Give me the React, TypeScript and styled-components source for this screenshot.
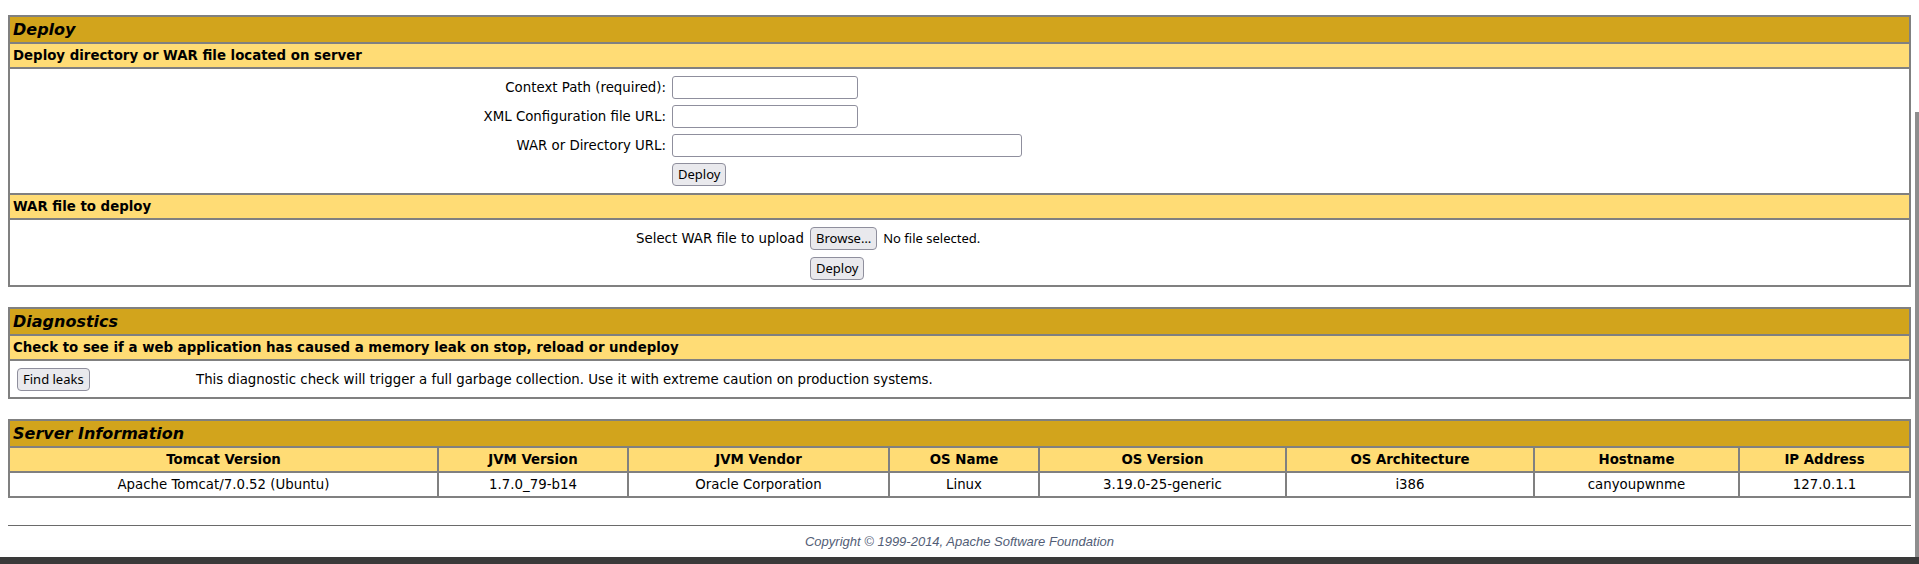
import React from "react";
import styled, { createGlobalStyle } from "styled-components";

const GlobalStyle = createGlobalStyle`
  *, *::before, *::after { box-sizing: border-box; }
  html, body { background: #ffffff; }
  body {
    margin: 0;
    padding: 15px 8px 0;
    font-family: "DejaVu Sans", sans-serif;
    color: #000000;
  }
`;

const Page = styled.div`
  display: flex;
  flex-direction: column;
  gap: 20px;
`;

const Panel = styled.table`
  width: 100%;
  border-spacing: 0;
  border: 1px solid #808080;
  table-layout: fixed;
`;

const Col = styled.col<{ $w: number }>`
  width: ${(p) => p.$w}px;
`;

const TitleCell = styled.td`
  background: #d2a41c;
  border: 1px solid #808080;
  padding: 3px;
  font-family: "DejaVu Sans", sans-serif;
  font-style: italic;
  font-weight: bold;
  font-size: 16px;
  line-height: 19px;
  text-align: left;
  vertical-align: top;
`;

const HeaderCell = styled.td<{ $center?: boolean }>`
  background: #ffdc75;
  border: 1px solid #808080;
  padding: 3px;
  font-family: "DejaVu Sans", sans-serif;
  font-weight: bold;
  font-size: 13.33px;
  line-height: 17px;
  text-align: ${(p) => (p.$center ? "center" : "left")};
  vertical-align: top;
  white-space: nowrap;
  overflow: hidden;
`;

const DataCell = styled.td`
  background: #ffffff;
  border: 1px solid #808080;
  padding: 3px;
  font-size: 13.33px;
  line-height: 17px;
  text-align: center;
  vertical-align: middle;
  white-space: nowrap;
  overflow: hidden;
`;

const BodyCell = styled.td<{ $top?: number; $bottom?: number }>`
  background: #ffffff;
  border: 1px solid #808080;
  padding: ${(p) => p.$top ?? 4}px 3px ${(p) => p.$bottom ?? 3}px;
`;

const FormGrid = styled.div<{ $labelWidth: number; $gap: number }>`
  display: grid;
  grid-template-columns: ${(p) => p.$labelWidth}px 1fr;
  row-gap: ${(p) => p.$gap}px;
`;

const FieldLabel = styled.div`
  padding: 3px;
  text-align: right;
  align-self: center;
  font-size: 13.33px;
  line-height: 17px;
  white-space: nowrap;
`;

const FieldControl = styled.div`
  padding: 3px;
  display: flex;
  align-items: center;
  gap: 6px;
`;

const TextInput = styled.input<{ $w: number }>`
  width: ${(p) => p.$w}px;
  height: 23px;
  border: 1px solid #8f8f9d;
  border-radius: 3px;
  background: #ffffff;
  padding: 0 4px;
  font-family: "Noto Sans", sans-serif;
  font-size: 13px;
  outline: none;
`;

const Button = styled.button`
  height: 23px;
  padding: 0 5px;
  border: 1px solid #8f8f9d;
  border-radius: 4px;
  background: #e9e9ed;
  color: #000000;
  font-family: "Noto Sans", sans-serif;
  font-size: 13px;
  line-height: 21px;
  cursor: pointer;
`;

const FileStatus = styled.span`
  font-family: "Noto Sans", sans-serif;
  font-size: 13px;
  line-height: 17px;
`;

const DiagRow = styled.div`
  display: grid;
  grid-template-columns: 180px 1fr;
  align-items: center;
`;

const DiagAction = styled.div`
  padding: 3px 3px 3px 4px;
  display: flex;
`;

const DiagText = styled.div`
  padding: 3px;
  font-size: 13.33px;
  line-height: 17px;
`;

const Footer = styled.div`
  margin-top: 27px;
  display: flex;
  flex-direction: column;
  gap: 8px;
`;

const Rule = styled.hr`
  margin: 0;
  border: none;
  height: 1px;
  background: #6a6a6a;
`;

const Copyright = styled.div`
  text-align: center;
  font-family: "Liberation Sans", Arial, sans-serif;
  font-style: italic;
  font-size: 13px;
  line-height: 15px;
  color: #525d76;
`;

const ScrollThumb = styled.div`
  position: fixed;
  top: 112px;
  right: 0;
  bottom: 7px;
  width: 4px;
  background: #8e8e8e;
`;

const BottomBar = styled.div`
  position: fixed;
  left: 0;
  right: 0;
  bottom: 0;
  height: 7px;
  background: #3a3a3a;
`;

const serverColumns = [
  { head: "Tomcat Version", value: "Apache Tomcat/7.0.52 (Ubuntu)", w: 429 },
  { head: "JVM Version", value: "1.7.0_79-b14", w: 190 },
  { head: "JVM Vendor", value: "Oracle Corporation", w: 261 },
  { head: "OS Name", value: "Linux", w: 150 },
  { head: "OS Version", value: "3.19.0-25-generic", w: 247 },
  { head: "OS Architecture", value: "i386", w: 248 },
  { head: "Hostname", value: "canyoupwnme", w: 205 },
  { head: "IP Address", value: "127.0.1.1", w: 171 },
];

export default function App() {
  return (
    <>
      <GlobalStyle />
      <Page>
        <Panel>
          <tbody>
            <tr>
              <TitleCell>Deploy</TitleCell>
            </tr>
            <tr>
              <HeaderCell>Deploy directory or WAR file located on server</HeaderCell>
            </tr>
            <tr>
              <BodyCell $bottom={4}>
                <FormGrid $labelWidth={656} $gap={0}>
                  <FieldLabel>Context Path (required):</FieldLabel>
                  <FieldControl>
                    <TextInput $w={186} type="text" />
                  </FieldControl>
                  <FieldLabel>XML Configuration file URL:</FieldLabel>
                  <FieldControl>
                    <TextInput $w={186} type="text" />
                  </FieldControl>
                  <FieldLabel>WAR or Directory URL:</FieldLabel>
                  <FieldControl>
                    <TextInput $w={350} type="text" />
                  </FieldControl>
                  <FieldLabel>&nbsp;</FieldLabel>
                  <FieldControl>
                    <Button type="button">Deploy</Button>
                  </FieldControl>
                </FormGrid>
              </BodyCell>
            </tr>
            <tr>
              <HeaderCell>WAR file to deploy</HeaderCell>
            </tr>
            <tr>
              <BodyCell $top={4} $bottom={2}>
                <FormGrid $labelWidth={794} $gap={1}>
                  <FieldLabel>Select WAR file to upload</FieldLabel>
                  <FieldControl>
                    <Button type="button">Browse…</Button>
                    <FileStatus>No file selected.</FileStatus>
                  </FieldControl>
                  <FieldLabel>&nbsp;</FieldLabel>
                  <FieldControl>
                    <Button type="button">Deploy</Button>
                  </FieldControl>
                </FormGrid>
              </BodyCell>
            </tr>
          </tbody>
        </Panel>

        <Panel>
          <tbody>
            <tr>
              <TitleCell>Diagnostics</TitleCell>
            </tr>
            <tr>
              <HeaderCell>
                Check to see if a web application has caused a memory leak on stop, reload or undeploy
              </HeaderCell>
            </tr>
            <tr>
              <BodyCell>
                <DiagRow>
                  <DiagAction>
                    <Button type="button">Find leaks</Button>
                  </DiagAction>
                  <DiagText>
                    This diagnostic check will trigger a full garbage collection. Use it with extreme
                    caution on production systems.
                  </DiagText>
                </DiagRow>
              </BodyCell>
            </tr>
          </tbody>
        </Panel>

        <Panel>
          <colgroup>
            {serverColumns.map((c) => (
              <Col key={c.head} $w={c.w} />
            ))}
          </colgroup>
          <tbody>
            <tr>
              <TitleCell colSpan={8}>Server Information</TitleCell>
            </tr>
            <tr>
              {serverColumns.map((c) => (
                <HeaderCell key={c.head} $center>
                  {c.head}
                </HeaderCell>
              ))}
            </tr>
            <tr>
              {serverColumns.map((c) => (
                <DataCell key={c.head}>{c.value}</DataCell>
              ))}
            </tr>
          </tbody>
        </Panel>
      </Page>

      <Footer>
        <Rule />
        <Copyright>Copyright © 1999-2014, Apache Software Foundation</Copyright>
      </Footer>

      <ScrollThumb />
      <BottomBar />
    </>
  );
}
